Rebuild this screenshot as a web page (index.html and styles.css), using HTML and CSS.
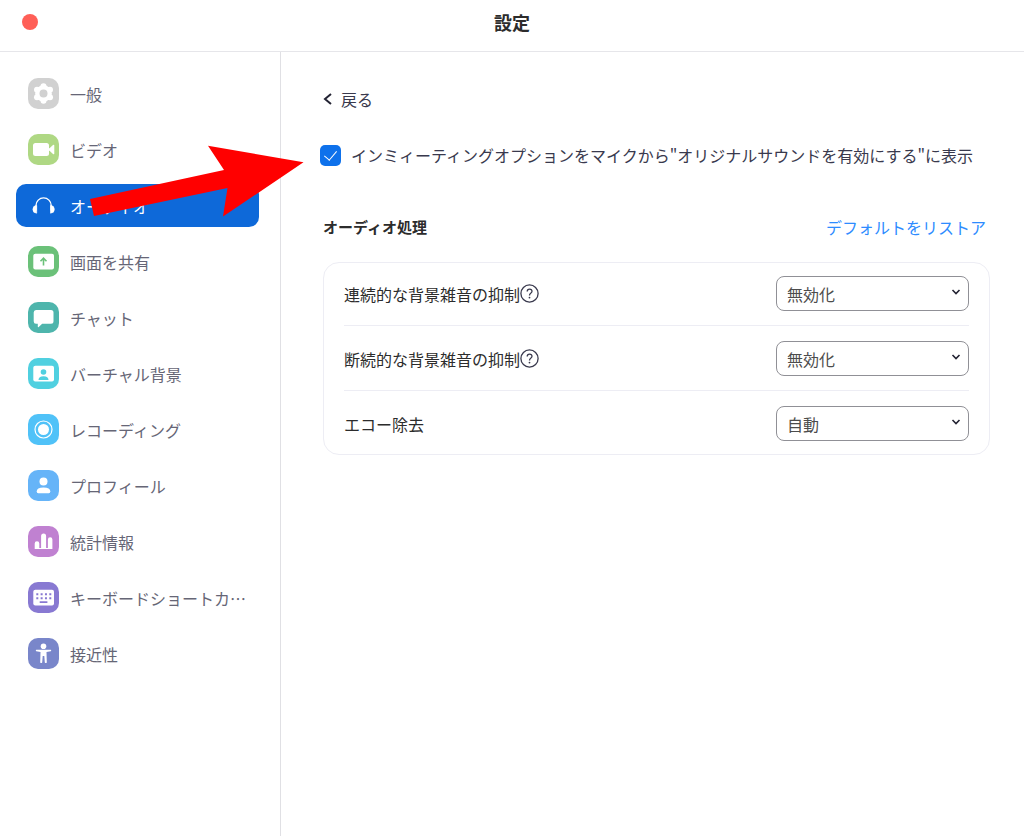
FILE: index.html
```html
<!DOCTYPE html>
<html lang="ja">
<head>
<meta charset="utf-8">
<meta name="viewport" content="width=device-width, initial-scale=1">
<title>設定</title>
<link rel="stylesheet" href="styles.css">
</head>
<body>
<div class="window">
  <header class="titlebar">
    <button class="close" type="button" aria-label="閉じる"></button>
    <h1 class="title">設定</h1>
  </header>
  <div class="body">
    <nav class="sidebar">
      <ul class="menu">
        <li class="entry"><a class="item" href="#general">
          <svg class="icon gray" viewBox="0 0 31 31"><g fill="#fff"><circle cx="15.5" cy="15.5" r="8.3"/><circle cx="15.5" cy="8.2" r="3"/><circle cx="15.5" cy="22.8" r="3"/><circle cx="9" cy="11.8" r="3"/><circle cx="22" cy="11.8" r="3"/><circle cx="9" cy="19.2" r="3"/><circle cx="22" cy="19.2" r="3"/></g><circle cx="15.5" cy="15.5" r="4" fill="#d1d1d1"/></svg>
          <span>一般</span></a></li>
        <li class="entry"><a class="item" href="#video">
          <svg class="icon lime" viewBox="0 0 31 31"><rect x="5" y="9" width="16" height="13" rx="2.5" fill="#fff"/><path d="M20 14.2h1.5L25 11q1.3-.8 1.3.5v8q0 1.3-1.3.5l-3.500-3.200H20z" fill="#fff"/></svg>
          <span>ビデオ</span></a></li>
        <li class="entry"><a class="item selected" href="#audio" aria-current="page">
          <svg class="icon" viewBox="0 0 31 31"><path d="M8 20.500v-5a7.600 7.600 0 0 1 15.200 0v5" fill="none" stroke="#fff" stroke-width="1.400"/><path d="M8.700 15.500v7.700a3.500 3.500 0 0 1 0-7.700zM22.500 15.500v7.700a3.500 3.500 0 0 0 0-7.700z" fill="#fff" stroke="#fff" stroke-width=".6"/></svg>
          <span>オーディオ</span></a>
          <svg class="pointer" viewBox="0 0 214 72" aria-hidden="true"><path d="M0 54 134 25 118 .7 213.500 17.300 133 71.500 137.500 43 4 71z" fill="#f00"/></svg>
        </li>
        <li class="entry"><a class="item" href="#share">
          <svg class="icon green" viewBox="0 0 31 31"><rect x="5.300" y="7.800" width="20.700" height="15.800" rx="2" fill="#fff"/><path d="M15.500 19.600v-7M12.500 15.200l3-3 3 3" fill="none" stroke="#6bc179" stroke-width="1.600"/></svg>
          <span>画面を共有</span></a></li>
        <li class="entry"><a class="item" href="#chat">
          <svg class="icon teal" viewBox="0 0 31 31"><path d="M8 8h15q2.500 0 2.500 2.500v8.700q0 2.500-2.500 2.500h-8.800l-3.500 3.300q-.9.700-.9-.5v-2.800H8q-2.300 0-2.300-2.500v-8.700Q5.700 8 8 8z" fill="#fff"/></svg>
          <span>チャット</span></a></li>
        <li class="entry"><a class="item" href="#background">
          <svg class="icon cyan" viewBox="0 0 31 31"><rect x="5.300" y="7.800" width="20.700" height="15.800" rx="2" fill="#fff"/><circle cx="15.500" cy="14" r="2.800" fill="#50d0e0"/><path d="M10.500 22q0-3.800 5-3.800t5 3.800z" fill="#50d0e0"/></svg>
          <span>バーチャル背景</span></a></li>
        <li class="entry"><a class="item" href="#recording">
          <svg class="icon sky" viewBox="0 0 31 31"><circle cx="15.500" cy="15.500" r="8.500" fill="none" stroke="#fff" stroke-width="1.200"/><circle cx="15.500" cy="15.500" r="5.500" fill="#fff"/></svg>
          <span>レコーディング</span></a></li>
        <li class="entry"><a class="item" href="#profile">
          <svg class="icon blue" viewBox="0 0 31 31"><circle cx="15.500" cy="11.500" r="4" fill="#fff"/><path d="M8.700 21.500q0-4 6.800-4t6.800 4q0 1.700-1.500 1.700H10.200q-1.500 0-1.500-1.700z" fill="#fff"/></svg>
          <span>プロフィール</span></a></li>
        <li class="entry"><a class="item" href="#stats">
          <svg class="icon purple" viewBox="0 0 31 31"><path d="M6.700 23v-5.500a2.200 2.200 0 0 1 4.600 0V22h1.800V10a2.400 2.400 0 0 1 5 0v12h1.800v-8.500a2.200 2.200 0 0 1 4.500 0V23z" fill="#fff"/></svg>
          <span>統計情報</span></a></li>
        <li class="entry"><a class="item" href="#keyboard">
          <svg class="icon violet" viewBox="0 0 31 31"><rect x="5.300" y="7.800" width="20.700" height="15.800" rx="2" fill="#fff"/><path d="M8.300 12.200h15M8.300 16.200h15" stroke="#8879d2" stroke-width="2" stroke-dasharray="2 2.330"/><path d="M11.700 20.200h7.700" stroke="#8879d2" stroke-width="1.700"/></svg>
          <span>キーボードショートカ…</span></a></li>
        <li class="entry"><a class="item" href="#accessibility">
          <svg class="icon indigo" viewBox="0 0 31 31"><circle cx="15.500" cy="8.200" r="2.800" fill="#fff"/><path d="M8.200 11.800h14.600q1 .8 0 1.500l-4.300.8.300 10.300q-1 1.400-2 0l-.5-6.400h-1.600l-.5 6.400q-1 1.400-2 0l.3-10.300-4.300-.8q-1-.7 0-1.500z" fill="#fff"/></svg>
          <span>接近性</span></a></li>
      </ul>
    </nav>
    <main class="content">
      <button class="back" type="button">
        <svg class="back-icon" viewBox="0 0 10 12" aria-hidden="true"><path d="M8 1 2 6l6 5" fill="none" stroke="#232333" stroke-width="2"/></svg>
        <span>戻る</span>
      </button>
      <div class="option">
        <input class="check" type="checkbox" id="original" checked>
        <label for="original">インミィーティングオプションをマイクから"オリジナルサウンドを有効にする"に表示</label>
      </div>
      <div class="section-head">
        <h2 class="section-title">オーディオ処理</h2>
        <a class="restore" href="#restore">デフォルトをリストア</a>
      </div>
      <div class="card">
        <div class="row">
          <label class="name" for="continuous">連続的な背景雑音の抑制</label>
          <button class="help" type="button" aria-label="ヘルプ"><svg viewBox="0 0 19 19"><circle cx="9.500" cy="9.500" r="8.600" fill="none" stroke="#39394d" stroke-width="1.300"/><path d="M7.200 7.600q0-2.500 2.400-2.500t2.400 2.200q0 1.100-1.300 2-1.200.8-1.200 2.200" fill="none" stroke="#39394d" stroke-width="1.300"/><circle cx="9.500" cy="13.600" r=".9" fill="#39394d"/></svg></button>
          <div class="picker"><select class="select" id="continuous"><option>無効化</option></select><svg class="chevron" viewBox="0 0 10 8" aria-hidden="true"><path d="m1.500 2 3.500 3.500L8.500 2" fill="none" stroke="#232333" stroke-width="1.600"/></svg></div>
        </div>
        <div class="row">
          <label class="name" for="intermittent">断続的な背景雑音の抑制</label>
          <button class="help" type="button" aria-label="ヘルプ"><svg viewBox="0 0 19 19"><circle cx="9.500" cy="9.500" r="8.600" fill="none" stroke="#39394d" stroke-width="1.300"/><path d="M7.200 7.600q0-2.500 2.400-2.500t2.400 2.200q0 1.100-1.300 2-1.200.8-1.200 2.200" fill="none" stroke="#39394d" stroke-width="1.300"/><circle cx="9.500" cy="13.600" r=".9" fill="#39394d"/></svg></button>
          <div class="picker"><select class="select" id="intermittent"><option>無効化</option></select><svg class="chevron" viewBox="0 0 10 8" aria-hidden="true"><path d="m1.500 2 3.500 3.500L8.500 2" fill="none" stroke="#232333" stroke-width="1.600"/></svg></div>
        </div>
        <div class="row">
          <label class="name" for="echo">エコー除去</label>
          <div class="picker"><select class="select" id="echo"><option>自動</option></select><svg class="chevron" viewBox="0 0 10 8" aria-hidden="true"><path d="m1.500 2 3.500 3.500L8.500 2" fill="none" stroke="#232333" stroke-width="1.600"/></svg></div>
        </div>
      </div>
    </main>
  </div>
</div>
</body>
</html>
```
FILE: styles.css
```css
* { box-sizing: border-box; }
body {
  margin: 0;
  background: #fff;
  color: #2c2c2c;
  font: 16px/24px "Noto Sans CJK JP", "Noto Sans", sans-serif;
}
button, select, input { font: inherit; color: inherit; margin: 0; }
button { border: 0; padding: 0; background: none; }
a { text-decoration: none; }

.window { min-height: 100vh; display: flex; flex-direction: column; }
.titlebar {
  display: grid;
  grid-template-columns: 1fr auto 1fr;
  align-items: center;
  padding: 8px 22px 15px;
  border-bottom: 1px solid #e6e6ea;
}
.close { width: 16px; height: 16px; border-radius: 50%; background: #ff5f57; }
.title { margin: 0; font-size: 18px; line-height: 28px; font-weight: 700; }
.body { flex: 1; display: flex; }

.sidebar { flex: 0 0 281px; border-right: 1px solid #e0e0e4; padding: 20px 21px 20px 16px; }
.menu { list-style: none; margin: 0; padding: 0; display: grid; gap: 13px; }
.entry { position: relative; }
.item {
  display: flex;
  align-items: center;
  gap: 11px;
  padding: 6px 12px;
  border-radius: 10px;
  color: #666676;
  white-space: nowrap;
}
.item.selected { background: #0e69d9; color: #fff; }
.icon { flex: none; width: 31px; height: 31px; border-radius: 10px; }
.gray { background: #d1d1d1; }
.lime { background: #afd884; }
.green { background: #6bc179; }
.teal { background: #4eb5ac; }
.cyan { background: #50d0e0; }
.sky { background: #50c2f8; }
.blue { background: #66b4f8; }
.purple { background: #c081d1; }
.violet { background: #8879d2; }
.indigo { background: #7986ca; }
.pointer { position: absolute; z-index: 1; left: 74px; top: -39px; width: 214px; height: 72px; pointer-events: none; }

.content { flex: 1; min-width: 0; padding: 35px 34px 35px 42px; }
.back { display: flex; align-items: center; gap: 8px; color: #39394d; }
.back-icon { width: 10px; height: 12px; }
.option { display: flex; align-items: center; gap: 10px; margin: 32px 0 48px -3px; color: #39394d; white-space: nowrap; }
.check {
  appearance: none;
  flex: none;
  width: 21px;
  height: 21px;
  border-radius: 5px;
  background: #0e71eb;
  display: grid;
  place-items: center;
}
.check:checked::before {
  content: "";
  width: 6px;
  height: 11px;
  margin-bottom: 2px;
  border: solid #fff;
  border-width: 0 1px 1px 0;
  transform: rotate(40deg);
}
.section-head { display: flex; align-items: center; justify-content: space-between; margin-bottom: 23px; padding-right: 4px; }
.section-title { margin: 0; font-size: 15px; line-height: 24px; font-weight: 700; }
.restore { color: #2d8cff; }
.card { border: 1px solid #ededf4; border-radius: 16px; padding: 0 20px; }
.row { display: flex; align-items: center; padding: 15px 0 14px; border-bottom: 1px solid #ededf4; }
.row:first-child { padding-top: 13px; }
.row:last-child { padding-bottom: 13px; border-bottom: 0; }
.help { width: 19px; height: 19px; }
.help svg { display: block; }
.picker { position: relative; flex: 0 0 193px; margin-left: auto; }
.select {
  appearance: none;
  display: block;
  width: 100%;
  height: 35px;
  padding: 0 30px 0 10px;
  border: 1px solid #909096;
  border-radius: 8px;
  background: #fff;
  color: #4c4c4c;
}
.chevron { position: absolute; right: 8px; top: 12px; width: 10px; height: 8px; pointer-events: none; }
```
